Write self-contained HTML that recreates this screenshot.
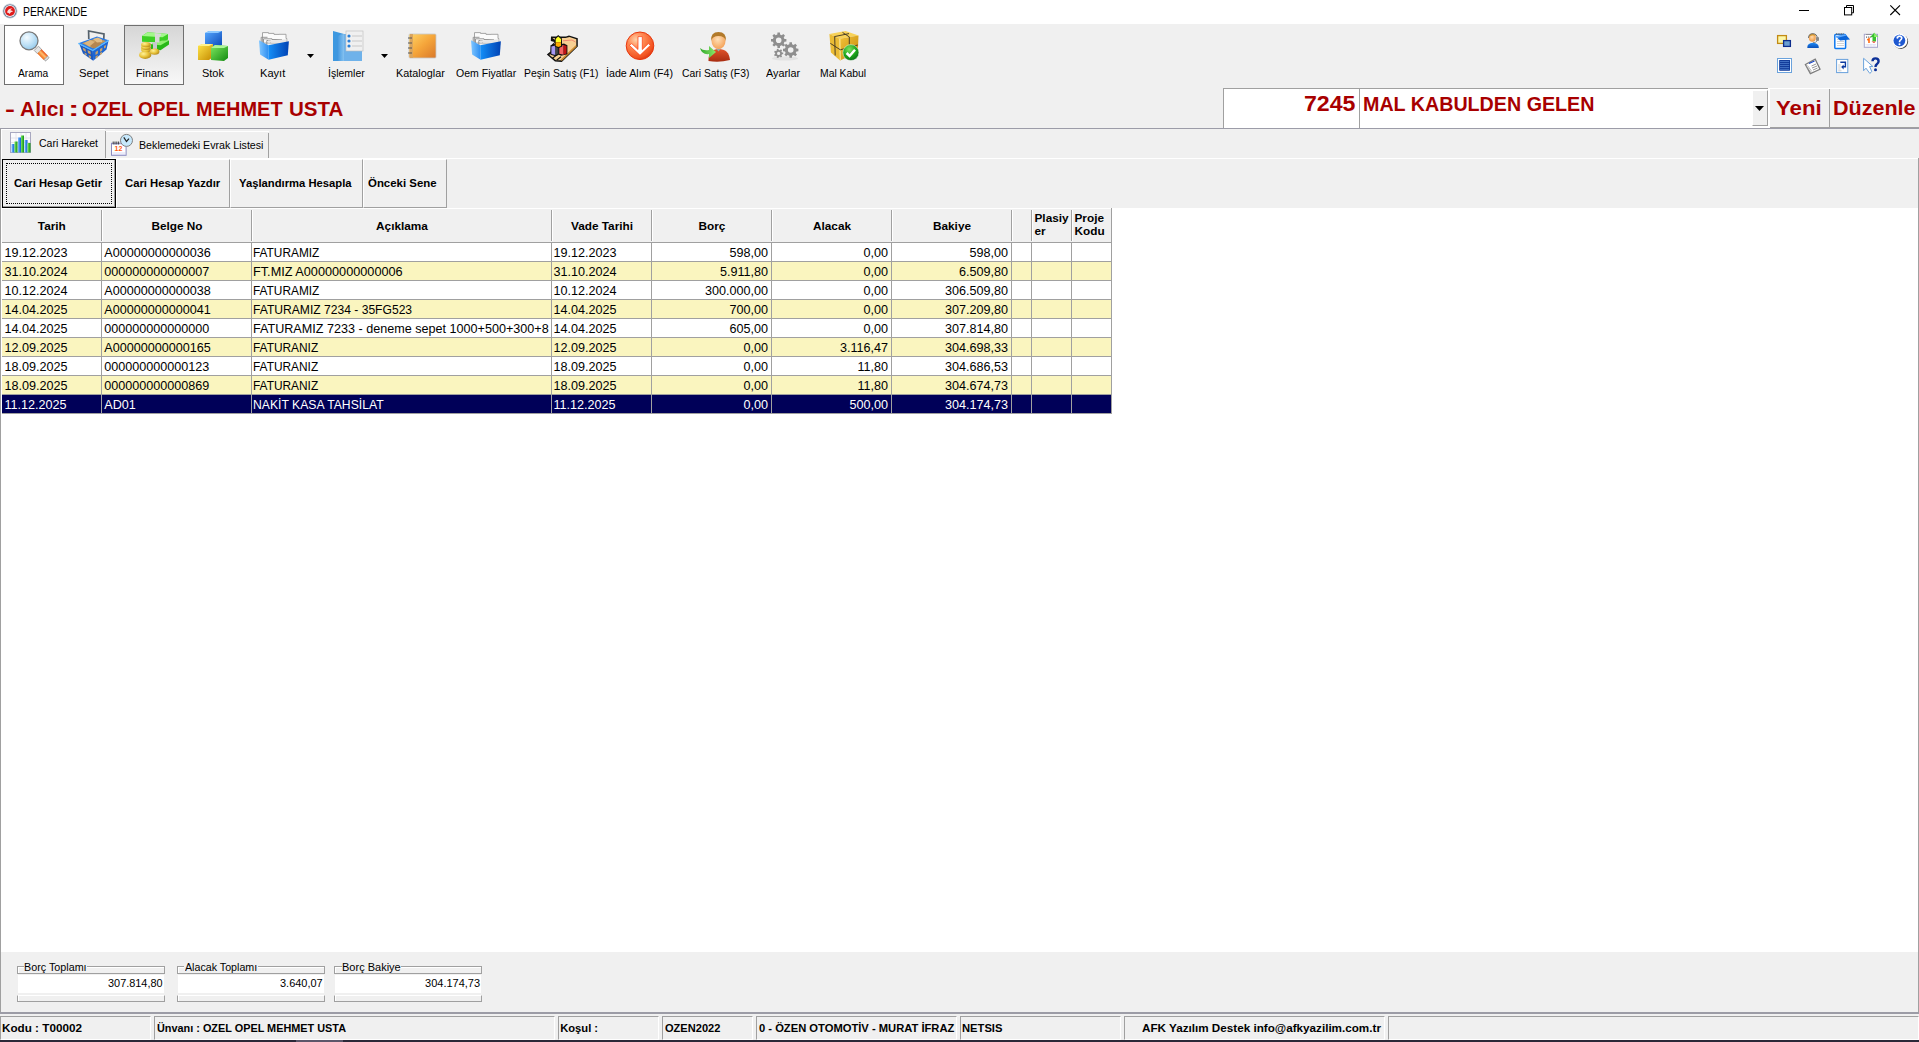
<!DOCTYPE html>
<html><head><meta charset="utf-8"><title>PERAKENDE</title>
<style>
*{box-sizing:border-box;margin:0;padding:0}
html,body{width:1919px;height:1042px;overflow:hidden;background:#f0f0f0;font-family:"Liberation Sans",sans-serif;color:#000;position:relative}
.a{position:absolute}
.t{position:absolute;white-space:nowrap;line-height:1}
svg.a{overflow:visible}
</style></head><body>
<div class="a" style="left:0px;top:0px;width:1919px;height:24px;background:#fff"></div>
<svg class="a" style="left:2px;top:3px" width="16" height="16" viewBox="0 0 16 16"><circle cx="8" cy="8" r="7.5" fill="#c9d0da"/><circle cx="8" cy="8" r="6.6" fill="#5e6e86"/><circle cx="8" cy="8" r="5.9" fill="#e8ecf2"/>
<circle cx="8" cy="8" r="4.9" fill="#e01a1a"/><path d="M5 9.5 Q6 5 10.5 5.5 Q8 6.5 8.5 7.5 Q10 7 11 8.5 Q8.5 8.5 7.5 11 Q7 9.5 5 9.5Z" fill="#fbe0dc"/></svg>
<div class="t" style="left:22.63px;top:6.44px;font-size:12px;transform:scaleX(0.8664);transform-origin:0 0;">PERAKENDE</div>
<div class="a" style="left:1799px;top:10px;width:10px;height:1px;background:#000"></div>
<svg class="a" style="left:1843px;top:4px" width="13" height="13" viewBox="0 0 13 13"><g fill="none" stroke="#000" stroke-width="1"><rect x="1.5" y="3.5" width="7.2" height="7.4"/><path d="M3.5 3.5V1.5H10.5V8.8H8.7"/></g></svg>
<svg class="a" style="left:1889px;top:4px" width="13" height="13" viewBox="0 0 13 13"><path d="M1.3 1.3L11 11M11 1.3L1.3 11" stroke="#000" stroke-width="1.1"/></svg>
<div class="a" style="left:4px;top:25px;width:60px;height:60px;background:#fff;border:1px solid #707070"></div>
<div class="a" style="left:124px;top:25px;width:60px;height:60px;background:linear-gradient(#d6d6d6,#f8f8f8);border:1px solid #707070"></div>
<svg class="a" style="left:18px;top:30px" width="32" height="32" viewBox="0 0 32 32"><defs><radialGradient id="gA" cx="0.38" cy="0.32" r="0.75"><stop offset="0" stop-color="#f4fbff"/><stop offset="0.55" stop-color="#bfe1f6"/><stop offset="1" stop-color="#8fc6ea"/></radialGradient>
<linearGradient id="gAh" x1="0" y1="0" x2="0" y2="1"><stop offset="0" stop-color="#e8480c"/><stop offset="0.45" stop-color="#ffc070"/><stop offset="1" stop-color="#f06414"/></linearGradient></defs>
<g transform="translate(23.6 23.6) rotate(45)">
<rect x="-7.5" y="-3" width="4.5" height="6" fill="#e4e4e4" stroke="#8a8a8a" stroke-width="0.7"/>
<rect x="-3" y="-3" width="9" height="6" fill="url(#gAh)"/>
<rect x="6" y="-2.6" width="2.2" height="5.2" rx="1" fill="#dcdcdc" stroke="#8a8a8a" stroke-width="0.7"/></g>
<circle cx="11" cy="10.8" r="9" fill="url(#gA)" stroke="#787878" stroke-width="1.3"/></svg>
<div class="t" style="left:17.90px;top:68.11px;font-size:10.5px;transform:scaleX(0.9742);transform-origin:0 0;">Arama</div>
<svg class="a" style="left:78px;top:30px" width="32" height="32" viewBox="0 0 32 32"><path d="M10.8 9 L10.6 1 L26 4 L25.6 12" fill="none" stroke="#56626c" stroke-width="1.7"/>
<path d="M0.4 13.3 L19 6.4 L30.7 10.2 L14.8 20.6Z" fill="#2a7ae6"/>
<path d="M4 13.2 L18.5 8.3 L28 11 L15 18.3Z" fill="#c49a5e"/>
<path d="M6 13 L12 10 L17 12 L17 16 L11 16.5Z" fill="#dcb47a"/><path d="M12 16 L18 11 L23 12.5 L22 16.5 L16 18.5Z" fill="#b48650"/><path d="M15 9 L20 7.5 L24 9.5 L24 12 L19 12.5Z" fill="#e2bd85"/>
<path d="M1.5 14.5 L14.8 20.6 L15.2 30.7 L5 23.5Z" fill="#1a58c0"/>
<path d="M14.8 20.6 L30.5 11 L28.5 19.5 L15.2 30.7Z" fill="#1d66d4"/>
<path d="M0.4 13.3 L14.8 20.6 L30.7 10.2" fill="none" stroke="#58b8ff" stroke-width="1.3"/>
<path d="M4.5 17.5L7.5 19L8 22L5.5 20.5Z M9.5 20L12.5 21.5L12.8 24.5L10 23Z M6.5 22.5L8.5 23.5L9 25.5L7 24.5Z M10.5 25L12.8 26L13 28.5L11 27.5Z M17.5 22L20 20.5L19.8 23.5L17.5 25Z M22 19L24.5 17.5L24.2 20.5L22 22Z M26 16L28 15L27.8 17.5L26 18.5Z M17.5 26.5L19.8 25L19.5 27.5L17.5 28.8Z M22 23L24 21.8L23.8 24L22 25.2Z" fill="#c9a26a"/></svg>
<div class="t" style="left:78.62px;top:68.11px;font-size:10.5px;transform:scaleX(1.0808);transform-origin:0 0;">Sepet</div>
<svg class="a" style="left:138px;top:30px" width="32" height="32" viewBox="0 0 32 32"><defs><radialGradient id="gC" cx="0.35" cy="0.35" r="0.75"><stop offset="0" stop-color="#fff39a"/><stop offset="0.55" stop-color="#e6bf35"/><stop offset="1" stop-color="#a9801a"/></radialGradient></defs>
<path d="M4 6 L9.5 2.3 L30 4 L30 9.5 L24.5 12.5 L4 11.8Z" fill="#3ccf24"/>
<path d="M4 6 L9.5 2.3 L30 4 L24.5 7.3Z" fill="#a2f88a"/>
<path d="M13 14.2 L24 10.6 L31 10.6 L31 14.5 L22.5 20.2 L13 19.2Z" fill="#28b818"/>
<path d="M13 14.2 L24 10.6 L31 10.6 L22.5 15.2Z" fill="#90f070"/>
<path d="M16.5 3.2 L23.5 3.8 L21.5 7.5 L21.5 12.5 L17 12.5 L17 7Z" fill="#d8d8d8"/>
<path d="M15 12.5 L19 12 L19 19 L15 19Z" fill="#c8c8d0"/>
<ellipse cx="8" cy="19.8" rx="4.9" ry="2.7" fill="url(#gC)"/><ellipse cx="8" cy="17.2" rx="4.9" ry="2.7" fill="url(#gC)"/><ellipse cx="8" cy="14.6" rx="4.9" ry="2.7" fill="url(#gC)"/>
<ellipse cx="16.7" cy="21.6" rx="4.7" ry="3.2" fill="url(#gC)"/>
<ellipse cx="7.2" cy="25" rx="6.2" ry="3.9" fill="url(#gC)"/></svg>
<div class="t" style="left:136.48px;top:68.11px;font-size:10.5px;transform:scaleX(1.0233);transform-origin:0 0;">Finans</div>
<svg class="a" style="left:198px;top:30px" width="32" height="32" viewBox="0 0 32 32"><defs><linearGradient id="gS1" x1="0" y1="0" x2="1" y2="1"><stop offset="0" stop-color="#57a8ff"/><stop offset="1" stop-color="#0a48b8"/></linearGradient>
<linearGradient id="gS2" x1="0" y1="0" x2="1" y2="1"><stop offset="0" stop-color="#ffe54a"/><stop offset="1" stop-color="#c48a00"/></linearGradient>
<linearGradient id="gS3" x1="0" y1="0" x2="1" y2="1"><stop offset="0" stop-color="#7fe860"/><stop offset="1" stop-color="#128a10"/></linearGradient></defs>
<path d="M7 3 L11 1 L24 1 L24 15 L20 17 L7 17Z" fill="url(#gS1)"/><path d="M7 3 L11 1 L24 1 L20 3Z" fill="#8cc8ff"/>
<path d="M0 16 L4 14 L15 14 L15 27 L11 30 L0 30Z" fill="url(#gS2)"/><path d="M0 16 L4 14 L15 14 L11 16Z" fill="#fff18a"/>
<path d="M13 18 L17 15 L30 16 L30 28 L26 31 L13 30Z" fill="url(#gS3)"/><path d="M13 18 L17 15 L30 16 L26 18Z" fill="#aef598"/></svg>
<div class="t" style="left:201.56px;top:68.11px;font-size:10.5px;transform:scaleX(1.0450);transform-origin:0 0;">Stok</div>
<svg class="a" style="left:258px;top:30px" width="32" height="32" viewBox="0 0 32 32"><defs><linearGradient id="gK" x1="0" y1="0" x2="1" y2="0"><stop offset="0" stop-color="#1590f8"/><stop offset="1" stop-color="#0042b4"/></linearGradient>
<linearGradient id="gKl" x1="0" y1="0" x2="1" y2="0"><stop offset="0" stop-color="#80c6ff"/><stop offset="1" stop-color="#2c8ef2"/></linearGradient></defs>
<path d="M4.5 13 V2.6 H10.5 V3.4 H16 V4.4 H21 V4.3 H28 V8.5 H28.8 V13 Z" fill="#fbfbfb" stroke="#9c9c9c" stroke-width="0.9"/>
<path d="M3.2 13.5 V7.3 H9.5 M5.5 14.5 V8.8 H14 V9.5 H24 M8.8 15 V10.5 H12.5 V13" fill="none" stroke="#8c8c8c" stroke-width="0.9"/>
<path d="M10 12.5 L10 10.5 L28.5 9.2 L28.5 13.5Z" fill="#e6e6e6"/>
<path d="M1 10.2 L10.2 15.2 L10.6 29.8 L2.1 24.4Z" fill="url(#gKl)"/>
<path d="M10.2 15.2 L30.9 11.2 L29.8 25.2 L10.6 29.8Z" fill="url(#gK)"/></svg>
<div class="t" style="left:260.44px;top:68.11px;font-size:10.5px;transform:scaleX(1.0565);transform-origin:0 0;">Kayıt</div>
<svg class="a" style="left:332px;top:30px" width="32" height="32" viewBox="0 0 32 32"><defs><linearGradient id="gI" x1="0" y1="0" x2="1" y2="0"><stop offset="0" stop-color="#3a92dd"/><stop offset="1" stop-color="#86c2f0"/></linearGradient></defs>
<path d="M1 1 L12 4 L12 31 L1 31Z" fill="#3d98e0"/>
<path d="M12 4 L30 4 L30 31 L12 31Z" fill="#6fb2ea"/>
<path d="M12 4 Q4 4 5 12 L5 31 L12 31Z" fill="url(#gI)"/>
<rect x="14" y="1" width="17" height="20" fill="#f0f0f0" stroke="#bcbcbc" stroke-width="0.6"/>
<circle cx="17" cy="6" r="1.6" fill="#2b7fd6"/><circle cx="17" cy="11" r="1.6" fill="#2b7fd6"/><circle cx="17" cy="16" r="1.6" fill="#2b7fd6"/>
<path d="M20 6H30M20 11H30M20 16H30" stroke="#c8c8c8" stroke-width="1.2"/></svg>
<div class="t" style="left:328.00px;top:68.11px;font-size:10.5px;transform:scaleX(1.0000);transform-origin:0 0;">İşlemler</div>
<svg class="a" style="left:406px;top:30px" width="32" height="32" viewBox="0 0 32 32"><defs><linearGradient id="gKt" x1="0" y1="0" x2="1" y2="1"><stop offset="0" stop-color="#ffd466"/><stop offset="0.5" stop-color="#f5a53a"/><stop offset="1" stop-color="#d9782a"/></linearGradient></defs>
<rect x="3" y="4" width="27" height="24" rx="1" fill="url(#gKt)" stroke="#c8c8c8" stroke-width="0.8"/>
<rect x="4" y="4" width="3" height="24" fill="#d9a560"/>
<path d="M2 8H6M2 13H6M2 18H6M2 23H6" stroke="#555" stroke-width="1.2"/></svg>
<div class="t" style="left:396.47px;top:68.11px;font-size:10.5px;transform:scaleX(1.0326);transform-origin:0 0;">Kataloglar</div>
<svg class="a" style="left:470px;top:30px" width="32" height="32" viewBox="0 0 32 32"><defs><linearGradient id="gK2" x1="0" y1="0" x2="1" y2="0"><stop offset="0" stop-color="#1590f8"/><stop offset="1" stop-color="#0042b4"/></linearGradient>
<linearGradient id="gK2l" x1="0" y1="0" x2="1" y2="0"><stop offset="0" stop-color="#80c6ff"/><stop offset="1" stop-color="#2c8ef2"/></linearGradient></defs>
<path d="M4.5 13 V2.6 H10.5 V3.4 H16 V4.4 H21 V4.3 H28 V8.5 H28.8 V13 Z" fill="#fbfbfb" stroke="#9c9c9c" stroke-width="0.9"/>
<path d="M3.2 13.5 V7.3 H9.5 M5.5 14.5 V8.8 H14 V9.5 H24 M8.8 15 V10.5 H12.5 V13" fill="none" stroke="#8c8c8c" stroke-width="0.9"/>
<path d="M10 12.5 L10 10.5 L28.5 9.2 L28.5 13.5Z" fill="#e6e6e6"/>
<path d="M1 10.2 L10.2 15.2 L10.6 29.8 L2.1 24.4Z" fill="url(#gK2l)"/>
<path d="M10.2 15.2 L30.9 11.2 L29.8 25.2 L10.6 29.8Z" fill="url(#gK2)"/></svg>
<div class="t" style="left:455.80px;top:68.11px;font-size:10.5px;transform:scaleX(1.0017);transform-origin:0 0;">Oem Fiyatlar</div>
<svg class="a" style="left:546px;top:30px" width="32" height="32" viewBox="0 0 32 32"><path d="M5 6.5 L20 6.5 L23 5.5 L31.8 8.3 L31.8 16.5 L15.8 32 L9 31.5 L0.8 24.5 L4.5 21.5 L5 15.5 L8.5 12 L4.8 11Z" fill="#111"/>
<path d="M6.5 8 L19.5 8 L23.5 7 L30.3 9.3 L30.3 15.8 L15.2 30.3 L10 30.2 L2.8 24.5 L6.2 21.8 L8 14 L10 10.8Z" fill="#f7cf92"/>
<path d="M15.2 30.3 L30.3 15.8" stroke="#c88a30" stroke-width="1.6"/>
<path d="M2.8 24.5 L7.5 21.3 M6.5 28.2 L11.2 24.6 M10.6 30.2 L15 26.8" stroke="#111" stroke-width="1.1"/>
<path d="M17 10.8 L26 10 L29.5 12" fill="none" stroke="#f08a70" stroke-width="1"/>
<path d="M4.5 15.3 L9.5 13.8 L12.8 15.3 L12.8 24.8 L9.5 26.3 L4.5 24.8Z" fill="#111"/>
<path d="M5.4 16.4 L9.4 15.4 L9.4 25 L5.4 23.9Z" fill="#a898f2"/>
<path d="M9.4 15.4 L11.9 16.1 L11.9 24.1 L9.4 25Z" fill="#454545"/>
<path d="M12.4 14.8 L18 13.6 L21.4 15.2 L21.4 24.2 L15.2 25.8 L12.4 24.6Z" fill="#111"/>
<path d="M13.3 15.9 L17.6 14.9 L17.6 24.7 L13.3 23.8Z" fill="#f26464"/>
<path d="M17.6 14.9 L20.5 15.9 L20.5 23.6 L17.6 24.7Z" fill="#c21212"/>
<path d="M12.2 5 L15.8 8.3 L16.2 16.6 L12.5 18.2 L8.8 16.6 L8.8 8.3Z" fill="#111"/>
<path d="M12.2 6.5 L15 9.1 L15 12.2 L9.7 12.2 L9.7 9.1Z" fill="#ffff22"/>
<path d="M9.7 12.2 L15 12.2 L15 16 L12.5 17.1 L9.7 16Z" fill="#ffaa00"/></svg>
<div class="t" style="left:523.71px;top:68.11px;font-size:10.5px;transform:scaleX(0.9905);transform-origin:0 0;">Peşin Satış (F1)</div>
<svg class="a" style="left:624px;top:30px" width="32" height="32" viewBox="0 0 32 32"><defs><radialGradient id="gIa" cx="0.35" cy="0.28" r="0.8"><stop offset="0" stop-color="#ffd2a8"/><stop offset="0.35" stop-color="#ff8a55"/><stop offset="0.8" stop-color="#f25522"/><stop offset="1" stop-color="#d83010"/></radialGradient></defs>
<circle cx="16" cy="15.8" r="13.8" fill="url(#gIa)" stroke="#e8380e" stroke-width="1"/>
<path d="M14 6.6 H18.3 V19.5 L24.3 13.6 L26.5 15.3 L16 25.3 L5.3 15.3 L7.7 13.6 L14 19.5Z" fill="#fff" stroke="#ff3a0a" stroke-width="0.7"/></svg>
<div class="t" style="left:605.88px;top:68.11px;font-size:10.5px;transform:scaleX(1.0169);transform-origin:0 0;">İade Alım (F4)</div>
<svg class="a" style="left:699px;top:30px" width="32" height="32" viewBox="0 0 32 32"><defs><radialGradient id="gCf" cx="0.45" cy="0.4" r="0.6"><stop offset="0" stop-color="#ffe0b8"/><stop offset="1" stop-color="#f5a35a"/></radialGradient>
<linearGradient id="gCb" x1="0" y1="0" x2="0" y2="1"><stop offset="0" stop-color="#e0532a"/><stop offset="1" stop-color="#a82c10"/></linearGradient>
<linearGradient id="gCg" x1="0" y1="0" x2="1" y2="0"><stop offset="0" stop-color="#2ea82a"/><stop offset="1" stop-color="#8ee86a"/></linearGradient></defs>
<path d="M9.5 31 Q9 19.5 19.5 19 Q30 19 31 30 Q20 33 9.5 31Z" fill="url(#gCb)"/>
<path d="M17 18.5 L19.5 21.5 L22 18.5Z" fill="#9aa"/>
<ellipse cx="19.5" cy="11" rx="7" ry="8" fill="url(#gCf)"/>
<path d="M12 11 Q11.5 2 19.5 2 Q27.5 2 27 11 Q25.5 6 19.5 6 Q13.5 6 12 11Z" fill="#b27a2a"/>
<path d="M1 18 Q3 25 10 24 L10 28 L17 22 L10 16 L10 20 Q4 21 1 18Z" fill="url(#gCg)"/></svg>
<div class="t" style="left:681.80px;top:68.11px;font-size:10.5px;transform:scaleX(0.9868);transform-origin:0 0;">Cari Satış (F3)</div>
<svg class="a" style="left:768px;top:30px" width="32" height="32" viewBox="0 0 32 32"><ellipse cx="17" cy="28.5" rx="13" ry="2" fill="#e2e2e2"/><g fill="#8e8e8e" fill-rule="evenodd"><path d="M18.40 9.08 L18.40 11.52 L16.44 11.68 L15.73 13.38 L17.01 14.88 L15.28 16.61 L13.78 15.33 L12.08 16.04 L11.92 18.00 L9.48 18.00 L9.32 16.04 L7.62 15.33 L6.12 16.61 L4.39 14.88 L5.67 13.38 L4.96 11.68 L3.00 11.52 L3.00 9.08 L4.96 8.92 L5.67 7.22 L4.39 5.72 L6.12 3.99 L7.62 5.27 L9.32 4.56 L9.48 2.60 L11.92 2.60 L12.08 4.56 L13.78 5.27 L15.28 3.99 L17.01 5.72 L15.73 7.22 L16.44 8.92Z M13.50 10.30 A2.8 2.8 0 1 0 7.90 10.30 A2.8 2.8 0 1 0 13.50 10.30Z"/><path d="M30.40 18.78 L30.40 21.22 L28.44 21.38 L27.73 23.08 L29.01 24.58 L27.28 26.31 L25.78 25.03 L24.08 25.74 L23.92 27.70 L21.48 27.70 L21.32 25.74 L19.62 25.03 L18.12 26.31 L16.39 24.58 L17.67 23.08 L16.96 21.38 L15.00 21.22 L15.00 18.78 L16.96 18.62 L17.67 16.92 L16.39 15.42 L18.12 13.69 L19.62 14.97 L21.32 14.26 L21.48 12.30 L23.92 12.30 L24.08 14.26 L25.78 14.97 L27.28 13.69 L29.01 15.42 L27.73 16.92 L28.44 18.62Z M25.50 20.00 A2.8 2.8 0 1 0 19.90 20.00 A2.8 2.8 0 1 0 25.50 20.00Z"/><path d="M15.22 22.56 L15.22 24.24 L13.97 24.33 L13.43 25.46 L14.14 26.49 L12.83 27.54 L11.98 26.62 L10.76 26.90 L10.39 28.10 L8.75 27.72 L8.94 26.48 L7.96 25.70 L6.80 26.16 L6.07 24.65 L7.16 24.02 L7.16 22.78 L6.07 22.15 L6.80 20.64 L7.96 21.10 L8.94 20.32 L8.75 19.08 L10.39 18.70 L10.76 19.90 L11.98 20.18 L12.83 19.26 L14.14 20.31 L13.43 21.34 L13.97 22.47Z M12.20 23.40 A1.6 1.6 0 1 0 9.00 23.40 A1.6 1.6 0 1 0 12.20 23.40Z"/></g></svg>
<div class="t" style="left:766.00px;top:68.11px;font-size:10.5px;transform:scaleX(1.0303);transform-origin:0 0;">Ayarlar</div>
<svg class="a" style="left:828px;top:30px" width="32" height="32" viewBox="0 0 32 32"><defs><radialGradient id="gMc" cx="0.4" cy="0.3" r="0.75"><stop offset="0" stop-color="#7ee060"/><stop offset="0.6" stop-color="#1aa41a"/><stop offset="1" stop-color="#0a6a1a"/></radialGradient>
<linearGradient id="gMr" x1="0" y1="0" x2="1" y2="1"><stop offset="0" stop-color="#f2c23a"/><stop offset="1" stop-color="#c48a0a"/></linearGradient></defs>
<path d="M1.4 4.1 L17.5 1 L30.5 5.6 L11.7 8.7Z" fill="#f8d257"/>
<path d="M1.4 4.1 L11.7 8.7 L12.1 30.5 L2.9 22.5Z" fill="#ebbc35"/>
<path d="M11.7 8.7 L30.5 5.6 L29.8 22 L12.1 30.5Z" fill="url(#gMr)"/>
<path d="M11.9 9 L12.3 30" stroke="#fff0a8" stroke-width="0.9"/>
<path d="M6.4 6.6 L21 3.6 M14.5 2.4 L21.3 6.9 L21.3 14.5 M6.7 6.6 L7.2 25.5 M2.3 13.3 L12.3 19.8 L29.8 15" fill="none" stroke="#3c3222" stroke-width="0.9"/>
<circle cx="22.9" cy="22.6" r="8" fill="url(#gMc)" stroke="#f8f8f8" stroke-width="0.5"/>
<path d="M18.6 23 L21.6 26 L27 19.8" fill="none" stroke="#fff" stroke-width="2.5"/></svg>
<div class="t" style="left:819.51px;top:68.11px;font-size:10.5px;transform:scaleX(0.9889);transform-origin:0 0;">Mal Kabul</div>
<svg class="a" style="left:307px;top:54px" width="7" height="4" viewBox="0 0 7 4"><path d="M0 0H7L3.5 4Z" fill="#000"/></svg>
<svg class="a" style="left:381px;top:54px" width="7" height="4" viewBox="0 0 7 4"><path d="M0 0H7L3.5 4Z" fill="#000"/></svg>
<svg class="a" style="left:1776px;top:33px" width="16" height="16" viewBox="0 0 16 16"><rect x="1.6" y="2.6" width="8.8" height="7.8" fill="#fdf7a6" stroke="#c28a14" stroke-width="1.3"/>
<rect x="7.6" y="7.6" width="6.8" height="5.8" fill="#6b9fd2" stroke="#0c2c8c" stroke-width="1.3"/></svg>
<svg class="a" style="left:1805px;top:33px" width="16" height="16" viewBox="0 0 16 16"><defs><linearGradient id="s2b" x1="0" y1="0" x2="0" y2="1"><stop offset="0" stop-color="#1f8af5"/><stop offset="1" stop-color="#0b4fb8"/></linearGradient>
<radialGradient id="s2f" cx="0.45" cy="0.4" r="0.6"><stop offset="0" stop-color="#ffdcae"/><stop offset="1" stop-color="#f0963e"/></radialGradient></defs>
<path d="M2.3 15 Q2 10 8 9.8 Q14 10 13.8 15Z" fill="url(#s2b)"/>
<ellipse cx="7.3" cy="4.8" rx="3.5" ry="4" fill="url(#s2f)"/>
<path d="M3.8 4 Q4 0.6 7.5 0.8 Q10.5 0.8 10.8 3.5 Q9 2 7 2.4 Q5 2.8 3.8 4Z" fill="#d89a28"/>
<path d="M3.5 5 Q3.6 0.5 8 0.7 Q12 0.8 12.3 5" fill="none" stroke="#707070" stroke-width="1"/>
<rect x="11" y="4" width="3" height="4" rx="1" fill="#8a8a8a"/>
<path d="M12 8 Q11 9.8 8 9.6" fill="none" stroke="#777" stroke-width="0.8"/></svg>
<svg class="a" style="left:1834px;top:33px" width="16" height="16" viewBox="0 0 16 16"><rect x="0.8" y="1.6" width="10.8" height="13.8" rx="0.8" fill="#fff" stroke="#0d78f0" stroke-width="1.5"/>
<path d="M2.5 0V2M4.2 0V2M5.9 0V2M7.6 0V2M9.3 0V2" stroke="#666" stroke-width="0.7"/>
<path d="M3 6.5H10M3 8.5H10M3 10.5H10M3 12.5H10" stroke="#c8c8c8" stroke-width="0.8"/>
<path d="M1.8 3.6 L11.4 1.2 L16 6.5 L6.1 7.5Z" fill="#0a64d8"/><path d="M1.8 3.6 L11.4 1.2 L12.5 2.5 L3 5Z" fill="#5aa8ff"/></svg>
<svg class="a" style="left:1863px;top:33px" width="16" height="16" viewBox="0 0 16 16"><rect x="1.3" y="1.3" width="13.2" height="13" fill="#fff" stroke="#a6a6cc" stroke-width="1"/>
<path d="M3 1.5H8.5" stroke="#888" stroke-width="0.8"/><path d="M3.2 4.1h0.9M5.3 4.1h0.9M7.4 4.1h0.9" stroke="#111" stroke-width="1"/>
<path d="M4.3 7 L6 6 L6 10" fill="none" stroke="#ff6a10" stroke-width="1.6"/>
<path d="M2.5 11.5H13M2.5 13H13M5 11V14M8 11V14M11 11V14" stroke="#dde0f4" stroke-width="0.7"/>
<path d="M8.5 8.5 L13 8.5 L11 10 Z" fill="#ee2a10"/>
<path d="M11.2 -0.2 L15.3 4 L13 4 L13 8.2 L9.5 8.2 L9.5 4 L7.2 4Z" fill="#38c030"/><path d="M11.2 -0.2 L15.3 4 L11.2 4Z" fill="#8ef06e"/></svg>
<svg class="a" style="left:1892px;top:33px" width="16" height="16" viewBox="0 0 16 16"><circle cx="8.8" cy="8.6" r="7.3" fill="#3a3a3a"/><circle cx="8" cy="7.8" r="7.4" fill="#fff"/>
<circle cx="7.4" cy="7.6" r="5.9" fill="#1e58d0"/><path d="M4.2 5 A3 3 0 0 1 10.4 5.5" fill="none" stroke="#5b8ae8" stroke-width="1"/>
<path d="M5.3 5.6 Q5.4 3.2 7.6 3.3 Q9.8 3.4 9.7 5.3 Q9.6 6.6 8.2 7.3 Q7.5 7.8 7.5 9.3" fill="none" stroke="#fff" stroke-width="1.6"/>
<circle cx="7.5" cy="11.3" r="1" fill="#fff"/></svg>
<svg class="a" style="left:1776px;top:58px" width="16" height="16" viewBox="0 0 16 16"><rect x="1.5" y="0.5" width="14" height="14" fill="#fff" stroke="#6aa2dc" stroke-width="1"/>
<rect x="3.2" y="1.9" width="10.8" height="10.8" rx="0.4" fill="#0d3796"/>
<path d="M4 3.4H13.2M4 5.4H13.2M4 7.4H13.2M4 9.4H13.2M4 11.3H13.2" stroke="#5d8fdc" stroke-width="0.7"/></svg>
<svg class="a" style="left:1805px;top:58px" width="16" height="16" viewBox="0 0 16 16"><path d="M0.4 6.5 L10.2 1.2 L15 11.3 L5.4 15.6Z" fill="#fff" stroke="#7c7c7c" stroke-width="1.3"/>
<path d="M1.5 8.5 L6 14.5 M2.5 7.5 L6.8 13.5" stroke="#9a9a9a" stroke-width="0.7"/>
<path d="M4 5.5 L9.5 3" stroke="#1b48c8" stroke-width="1.2"/>
<path d="M6.5 8 L11 6 M7 10 L12 8 M8 12 L12.5 10" stroke="#8a8a8a" stroke-width="0.9"/></svg>
<svg class="a" style="left:1834px;top:58px" width="16" height="16" viewBox="0 0 16 16"><rect x="2.6" y="1.4" width="11.2" height="13.2" fill="#fff" stroke="#68a0dc" stroke-width="1"/>
<path d="M4.2 7H6.8M4.2 9H6.8M4.2 11H6.5M4.2 12.8H7.5" stroke="#c0c0c0" stroke-width="0.8"/>
<path d="M6.3 4.3 H11.4 V8.8 H8.5" fill="none" stroke="#0c3aa0" stroke-width="1.4"/>
<path d="M7.1 9 L9.6 6.6 L9.6 11.5Z" fill="#0c3aa0"/></svg>
<svg class="a" style="left:1863px;top:58px" width="16" height="16" viewBox="0 0 16 16"><path d="M0.6 0.3 L0.6 12.7 L3 10.2 L6.8 15.4 L8.8 13.5 L6.6 8.6 L9.8 8.4Z" fill="#fff" stroke="#5a98d8" stroke-width="0.9"/>
<path d="M9.5 3.2 Q9.6 0.4 12.4 0.4 Q15.6 0.4 15.6 3.2 Q15.6 5 13.8 6.2 Q12.5 7.2 12.5 9" fill="none" stroke="#0c3098" stroke-width="2.4"/>
<circle cx="12.5" cy="11.8" r="1.5" fill="#0c3098"/></svg>
<div class="t" style="left:5.04px;top:98.65px;font-size:20.5px;transform:scaleX(1.4600);transform-origin:0 0;font-weight:bold;color:#a80000;">-</div>
<div class="t" style="left:19.98px;top:98.65px;font-size:20.5px;transform:scaleX(1.0244);transform-origin:0 0;font-weight:bold;color:#a80000;">Alıcı</div>
<div class="t" style="left:67.67px;top:98.65px;font-size:20.5px;transform:scaleX(1.6667);transform-origin:0 0;font-weight:bold;color:#a80000;">:</div>
<div class="t" style="left:82.37px;top:98.65px;font-size:20.5px;transform:scaleX(0.9340);transform-origin:0 0;font-weight:bold;color:#a80000;">OZEL</div>
<div class="t" style="left:138.27px;top:98.65px;font-size:20.5px;transform:scaleX(0.9315);transform-origin:0 0;font-weight:bold;color:#a80000;">OPEL</div>
<div class="t" style="left:195.72px;top:98.65px;font-size:20.5px;transform:scaleX(0.9750);transform-origin:0 0;font-weight:bold;color:#a80000;">MEHMET</div>
<div class="t" style="left:288.70px;top:98.65px;font-size:20.5px;transform:scaleX(1.0019);transform-origin:0 0;font-weight:bold;color:#a80000;">USTA</div>
<div class="a" style="left:1223px;top:88px;width:546px;height:40px;background:#fff;border-left:1px solid #a0a0a0;border-top:1px solid #a0a0a0"></div>
<div class="a" style="left:1359px;top:89px;width:1px;height:39px;background:#a0a0a0"></div>
<div class="t" style="left:1304.45px;top:92.68px;font-size:22px;transform:scaleX(1.0521);transform-origin:0 0;font-weight:bold;color:#a80000;">7245</div>
<div class="t" style="left:1362.72px;top:93.67px;font-size:20px;transform:scaleX(0.9841);transform-origin:0 0;font-weight:bold;color:#a80000;">MAL KABULDEN GELEN</div>
<div class="a" style="left:1752px;top:90px;width:16px;height:36px;background:#f0f0f0;border-right:1px solid #a0a0a0;border-bottom:1px solid #a0a0a0;border-left:1px solid #fff;border-top:1px solid #fff"></div>
<svg class="a" style="left:1755px;top:106px" width="9" height="5" viewBox="0 0 9 5"><path d="M0 0H9L4.5 5Z" fill="#000"/></svg>
<div class="a" style="left:1768px;top:88px;width:151px;height:40px;background:#f0f0f0;border-top:1px solid #fff"></div>
<div class="a" style="left:1768px;top:88px;width:2px;height:40px;background:#fff"></div>
<div class="a" style="left:1829px;top:89px;width:1px;height:38px;background:#a0a0a0"></div>
<div class="a" style="left:1770px;top:127px;width:149px;height:1px;background:#a0a0a0"></div>
<div class="t" style="left:1775.94px;top:97.22px;font-size:21px;transform:scaleX(1.0585);transform-origin:0 0;font-weight:bold;color:#a80000;">Yeni</div>
<div class="t" style="left:1832.57px;top:97.22px;font-size:21px;transform:scaleX(1.0253);transform-origin:0 0;font-weight:bold;color:#a80000;">Düzenle</div>
<div class="a" style="left:0px;top:128px;width:1919px;height:1px;background:#9c9ca8"></div>
<div class="a" style="left:1px;top:129px;width:104px;height:30px;background:#f0f0f0;border-left:1px solid #fff;border-top:1px solid #fff"></div>
<div class="a" style="left:105px;top:131px;width:1px;height:27px;background:#a0a0a0"></div>
<svg class="a" style="left:10px;top:132px" width="21" height="21" viewBox="0 0 21 21"><defs><linearGradient id="tcb" x1="0" y1="0" x2="1" y2="0"><stop offset="0" stop-color="#7cc0ff"/><stop offset="1" stop-color="#0a5ad8"/></linearGradient>
<linearGradient id="tcg" x1="0" y1="0" x2="1" y2="0"><stop offset="0" stop-color="#7ae860"/><stop offset="1" stop-color="#109010"/></linearGradient></defs>
<rect x="0.5" y="0.5" width="20" height="20" fill="#fbfbfd" stroke="#a8a8c0" stroke-width="1"/>
<path d="M1 6H20M1 10.5H20M1 15H20M6 1V20M11 1V20M16 1V20" stroke="#e0e0e8" stroke-width="0.8"/>
<rect x="1.5" y="12" width="3" height="8.5" fill="url(#tcb)"/><rect x="4.5" y="9.5" width="3" height="11" fill="url(#tcg)"/>
<rect x="8" y="5.5" width="3" height="15" fill="url(#tcb)"/><rect x="11" y="3.5" width="3" height="17" fill="url(#tcg)"/>
<rect x="14.5" y="8" width="3" height="12.5" fill="url(#tcb)"/><rect x="17.5" y="11" width="3" height="9.5" fill="url(#tcg)"/></svg>
<div class="t" style="left:39.00px;top:138.11px;font-size:10.5px;">Cari Hareket</div>
<div class="a" style="left:106px;top:131px;width:163px;height:27px;background:#f0f0f0;border-top:1px solid #fff"></div>
<div class="a" style="left:268px;top:133px;width:1px;height:25px;background:#a0a0a0"></div>
<svg class="a" style="left:111px;top:134px" width="22" height="22" viewBox="0 0 22 22"><rect x="0.5" y="9.3" width="14.6" height="12" fill="#fff" stroke="#8a8ac0" stroke-width="1"/>
<path d="M2.5 10.5H13.5" stroke="#e8e8ff" stroke-width="1"/>
<path d="M2.2 7.5V10.5M4 7.5V10.5M5.8 7.5V10.5M7.6 7.5V10.5" stroke="#333" stroke-width="0.9"/>
<text x="3.6" y="17.3" font-family="Liberation Sans" font-weight="bold" font-size="7" fill="#ff5a10">12</text>
<path d="M1.5 19H14M1.5 20.5H14" stroke="#d0d0f0" stroke-width="0.8"/>
<circle cx="15.5" cy="6.4" r="6" fill="#c6e8fc" stroke="#808080" stroke-width="1"/>
<path d="M12.8 3.4 L15.5 7.5 L18 4.6" fill="none" stroke="#222" stroke-width="1.2"/></svg>
<div class="t" style="left:139.28px;top:140.11px;font-size:10.5px;transform:scaleX(1.0157);transform-origin:0 0;">Beklemedeki Evrak Listesi</div>
<div class="a" style="left:0px;top:129px;width:1px;height:884px;background:#a0a0a0"></div>
<div class="a" style="left:1918px;top:158px;width:1px;height:855px;background:#a0a0a0"></div>
<div class="a" style="left:106px;top:158px;width:1812px;height:1px;background:#fff"></div>
<div class="a" style="left:2px;top:159px;width:114px;height:49px;border:1px solid #000;background:#f0f0f0;box-shadow:inset -1px -1px 0 #a0a0a0"></div>
<div class="a" style="left:6px;top:163px;width:106px;height:41px;border:1px dotted #000"></div>
<div class="t" style="left:14.40px;top:178.43px;font-size:11.3px;transform:scaleX(0.9944);transform-origin:0 0;font-weight:bold;">Cari Hesap Getir</div>
<div class="a" style="left:116px;top:159px;width:114px;height:49px;border-right:1px solid #a0a0a0;border-bottom:1px solid #a0a0a0;border-left:1px solid #fff;border-top:1px solid #fff"></div>
<div class="t" style="left:125.00px;top:178.43px;font-size:11.3px;transform:scaleX(1.0000);transform-origin:0 0;font-weight:bold;">Cari Hesap Yazdır</div>
<div class="a" style="left:230px;top:159px;width:133px;height:49px;border-right:1px solid #a0a0a0;border-bottom:1px solid #a0a0a0;border-left:1px solid #fff;border-top:1px solid #fff"></div>
<div class="t" style="left:238.75px;top:178.43px;font-size:11.3px;transform:scaleX(0.9956);transform-origin:0 0;font-weight:bold;">Yaşlandırma Hesapla</div>
<div class="a" style="left:363px;top:159px;width:84px;height:49px;border-right:1px solid #a0a0a0;border-bottom:1px solid #a0a0a0;border-left:1px solid #fff;border-top:1px solid #fff"></div>
<div class="t" style="left:367.50px;top:178.43px;font-size:11.3px;transform:scaleX(1.0110);transform-origin:0 0;font-weight:bold;">Önceki Sene</div>
<div class="a" style="left:1px;top:208px;width:1917px;height:744px;background:#fff"></div>
<div class="a" style="left:2px;top:209px;width:1109px;height:33px;background:#f0f0f0"></div>
<div class="a" style="left:2px;top:242px;width:1110px;height:1px;background:#a0a0a0"></div>
<div class="t" style="left:2.30px;width:99px;text-align:center;top:220.51px;font-size:11.8px;font-weight:bold;">Tarih</div>
<div class="t" style="left:102.00px;width:150px;text-align:center;top:220.51px;font-size:11.8px;font-weight:bold;">Belge No</div>
<div class="t" style="left:252.00px;width:300px;text-align:center;top:220.51px;font-size:11.8px;font-weight:bold;">Açıklama</div>
<div class="t" style="left:552.00px;width:100px;text-align:center;top:220.51px;font-size:11.8px;font-weight:bold;">Vade Tarihi</div>
<div class="t" style="left:652.00px;width:120px;text-align:center;top:220.51px;font-size:11.8px;font-weight:bold;">Borç</div>
<div class="t" style="left:772.00px;width:120px;text-align:center;top:220.51px;font-size:11.8px;font-weight:bold;">Alacak</div>
<div class="t" style="left:892.00px;width:120px;text-align:center;top:220.51px;font-size:11.8px;font-weight:bold;">Bakiye</div>
<div class="t" style="left:1034.50px;top:212.61px;font-size:11.8px;font-weight:bold;">Plasiy</div>
<div class="t" style="left:1034.50px;top:225.51px;font-size:11.8px;font-weight:bold;">er</div>
<div class="t" style="left:1074.50px;top:212.61px;font-size:11.8px;font-weight:bold;">Proje</div>
<div class="t" style="left:1074.50px;top:225.51px;font-size:11.8px;font-weight:bold;">Kodu</div>
<div class="a" style="left:101px;top:210px;width:1px;height:31px;background:#a0a0a0"></div>
<div class="a" style="left:102px;top:210px;width:1px;height:31px;background:#fff"></div>
<div class="a" style="left:251px;top:210px;width:1px;height:31px;background:#a0a0a0"></div>
<div class="a" style="left:252px;top:210px;width:1px;height:31px;background:#fff"></div>
<div class="a" style="left:551px;top:210px;width:1px;height:31px;background:#a0a0a0"></div>
<div class="a" style="left:552px;top:210px;width:1px;height:31px;background:#fff"></div>
<div class="a" style="left:651px;top:210px;width:1px;height:31px;background:#a0a0a0"></div>
<div class="a" style="left:652px;top:210px;width:1px;height:31px;background:#fff"></div>
<div class="a" style="left:771px;top:210px;width:1px;height:31px;background:#a0a0a0"></div>
<div class="a" style="left:772px;top:210px;width:1px;height:31px;background:#fff"></div>
<div class="a" style="left:891px;top:210px;width:1px;height:31px;background:#a0a0a0"></div>
<div class="a" style="left:892px;top:210px;width:1px;height:31px;background:#fff"></div>
<div class="a" style="left:1011px;top:210px;width:1px;height:31px;background:#a0a0a0"></div>
<div class="a" style="left:1012px;top:210px;width:1px;height:31px;background:#fff"></div>
<div class="a" style="left:1031px;top:210px;width:1px;height:31px;background:#a0a0a0"></div>
<div class="a" style="left:1032px;top:210px;width:1px;height:31px;background:#fff"></div>
<div class="a" style="left:1071px;top:210px;width:1px;height:31px;background:#a0a0a0"></div>
<div class="a" style="left:1072px;top:210px;width:1px;height:31px;background:#fff"></div>
<div class="a" style="left:1111px;top:208px;width:1px;height:35px;background:#a0a0a0"></div>
<div class="a" style="left:2px;top:243px;width:1109px;height:18px;background:#fff"></div>
<div class="a" style="left:2px;top:261px;width:1110px;height:1px;background:#a0a0a0"></div>
<div class="t" style="left:4.50px;top:247.23px;font-size:12.6px;">19.12.2023</div>
<div class="t" style="left:104.30px;top:247.23px;font-size:12.6px;">A00000000000036</div>
<div class="t" style="left:252.96px;top:247.23px;font-size:12.6px;transform:scaleX(0.9420);transform-origin:0 0;">FATURAMIZ</div>
<div class="t" style="left:553.50px;top:247.23px;font-size:12.6px;">19.12.2023</div>
<div class="t" style="left:648.00px;width:120px;text-align:right;top:247.23px;font-size:12.6px;">598,00</div>
<div class="t" style="left:768.00px;width:120px;text-align:right;top:247.23px;font-size:12.6px;">0,00</div>
<div class="t" style="left:888.00px;width:120px;text-align:right;top:247.23px;font-size:12.6px;">598,00</div>
<div class="a" style="left:101px;top:243px;width:1px;height:18px;background:#a0a0a0"></div>
<div class="a" style="left:251px;top:243px;width:1px;height:18px;background:#a0a0a0"></div>
<div class="a" style="left:551px;top:243px;width:1px;height:18px;background:#a0a0a0"></div>
<div class="a" style="left:651px;top:243px;width:1px;height:18px;background:#a0a0a0"></div>
<div class="a" style="left:771px;top:243px;width:1px;height:18px;background:#a0a0a0"></div>
<div class="a" style="left:891px;top:243px;width:1px;height:18px;background:#a0a0a0"></div>
<div class="a" style="left:1011px;top:243px;width:1px;height:18px;background:#a0a0a0"></div>
<div class="a" style="left:1031px;top:243px;width:1px;height:18px;background:#a0a0a0"></div>
<div class="a" style="left:1071px;top:243px;width:1px;height:18px;background:#a0a0a0"></div>
<div class="a" style="left:1111px;top:243px;width:1px;height:18px;background:#a0a0a0"></div>
<div class="a" style="left:2px;top:262px;width:1109px;height:18px;background:#faf5bf"></div>
<div class="a" style="left:2px;top:280px;width:1110px;height:1px;background:#a0a0a0"></div>
<div class="t" style="left:4.50px;top:266.23px;font-size:12.6px;">31.10.2024</div>
<div class="t" style="left:104.30px;top:266.23px;font-size:12.6px;">000000000000007</div>
<div class="t" style="left:252.89px;top:266.23px;font-size:12.6px;transform:scaleX(1.0082);transform-origin:0 0;">FT.MIZ A00000000000006</div>
<div class="t" style="left:553.50px;top:266.23px;font-size:12.6px;">31.10.2024</div>
<div class="t" style="left:648.00px;width:120px;text-align:right;top:266.23px;font-size:12.6px;">5.911,80</div>
<div class="t" style="left:768.00px;width:120px;text-align:right;top:266.23px;font-size:12.6px;">0,00</div>
<div class="t" style="left:888.00px;width:120px;text-align:right;top:266.23px;font-size:12.6px;">6.509,80</div>
<div class="a" style="left:101px;top:262px;width:1px;height:18px;background:#a0a0a0"></div>
<div class="a" style="left:251px;top:262px;width:1px;height:18px;background:#a0a0a0"></div>
<div class="a" style="left:551px;top:262px;width:1px;height:18px;background:#a0a0a0"></div>
<div class="a" style="left:651px;top:262px;width:1px;height:18px;background:#a0a0a0"></div>
<div class="a" style="left:771px;top:262px;width:1px;height:18px;background:#a0a0a0"></div>
<div class="a" style="left:891px;top:262px;width:1px;height:18px;background:#a0a0a0"></div>
<div class="a" style="left:1011px;top:262px;width:1px;height:18px;background:#a0a0a0"></div>
<div class="a" style="left:1031px;top:262px;width:1px;height:18px;background:#a0a0a0"></div>
<div class="a" style="left:1071px;top:262px;width:1px;height:18px;background:#a0a0a0"></div>
<div class="a" style="left:1111px;top:262px;width:1px;height:18px;background:#a0a0a0"></div>
<div class="a" style="left:2px;top:281px;width:1109px;height:18px;background:#fff"></div>
<div class="a" style="left:2px;top:299px;width:1110px;height:1px;background:#a0a0a0"></div>
<div class="t" style="left:4.50px;top:285.23px;font-size:12.6px;">10.12.2024</div>
<div class="t" style="left:104.30px;top:285.23px;font-size:12.6px;">A00000000000038</div>
<div class="t" style="left:252.96px;top:285.23px;font-size:12.6px;transform:scaleX(0.9420);transform-origin:0 0;">FATURAMIZ</div>
<div class="t" style="left:553.50px;top:285.23px;font-size:12.6px;">10.12.2024</div>
<div class="t" style="left:648.00px;width:120px;text-align:right;top:285.23px;font-size:12.6px;">300.000,00</div>
<div class="t" style="left:768.00px;width:120px;text-align:right;top:285.23px;font-size:12.6px;">0,00</div>
<div class="t" style="left:888.00px;width:120px;text-align:right;top:285.23px;font-size:12.6px;">306.509,80</div>
<div class="a" style="left:101px;top:281px;width:1px;height:18px;background:#a0a0a0"></div>
<div class="a" style="left:251px;top:281px;width:1px;height:18px;background:#a0a0a0"></div>
<div class="a" style="left:551px;top:281px;width:1px;height:18px;background:#a0a0a0"></div>
<div class="a" style="left:651px;top:281px;width:1px;height:18px;background:#a0a0a0"></div>
<div class="a" style="left:771px;top:281px;width:1px;height:18px;background:#a0a0a0"></div>
<div class="a" style="left:891px;top:281px;width:1px;height:18px;background:#a0a0a0"></div>
<div class="a" style="left:1011px;top:281px;width:1px;height:18px;background:#a0a0a0"></div>
<div class="a" style="left:1031px;top:281px;width:1px;height:18px;background:#a0a0a0"></div>
<div class="a" style="left:1071px;top:281px;width:1px;height:18px;background:#a0a0a0"></div>
<div class="a" style="left:1111px;top:281px;width:1px;height:18px;background:#a0a0a0"></div>
<div class="a" style="left:2px;top:300px;width:1109px;height:18px;background:#faf5bf"></div>
<div class="a" style="left:2px;top:318px;width:1110px;height:1px;background:#a0a0a0"></div>
<div class="t" style="left:4.50px;top:304.23px;font-size:12.6px;">14.04.2025</div>
<div class="t" style="left:104.30px;top:304.23px;font-size:12.6px;">A00000000000041</div>
<div class="t" style="left:252.94px;top:304.23px;font-size:12.6px;transform:scaleX(0.9604);transform-origin:0 0;">FATURAMIZ 7234 - 35FG523</div>
<div class="t" style="left:553.50px;top:304.23px;font-size:12.6px;">14.04.2025</div>
<div class="t" style="left:648.00px;width:120px;text-align:right;top:304.23px;font-size:12.6px;">700,00</div>
<div class="t" style="left:768.00px;width:120px;text-align:right;top:304.23px;font-size:12.6px;">0,00</div>
<div class="t" style="left:888.00px;width:120px;text-align:right;top:304.23px;font-size:12.6px;">307.209,80</div>
<div class="a" style="left:101px;top:300px;width:1px;height:18px;background:#a0a0a0"></div>
<div class="a" style="left:251px;top:300px;width:1px;height:18px;background:#a0a0a0"></div>
<div class="a" style="left:551px;top:300px;width:1px;height:18px;background:#a0a0a0"></div>
<div class="a" style="left:651px;top:300px;width:1px;height:18px;background:#a0a0a0"></div>
<div class="a" style="left:771px;top:300px;width:1px;height:18px;background:#a0a0a0"></div>
<div class="a" style="left:891px;top:300px;width:1px;height:18px;background:#a0a0a0"></div>
<div class="a" style="left:1011px;top:300px;width:1px;height:18px;background:#a0a0a0"></div>
<div class="a" style="left:1031px;top:300px;width:1px;height:18px;background:#a0a0a0"></div>
<div class="a" style="left:1071px;top:300px;width:1px;height:18px;background:#a0a0a0"></div>
<div class="a" style="left:1111px;top:300px;width:1px;height:18px;background:#a0a0a0"></div>
<div class="a" style="left:2px;top:319px;width:1109px;height:18px;background:#fff"></div>
<div class="a" style="left:2px;top:337px;width:1110px;height:1px;background:#a0a0a0"></div>
<div class="t" style="left:4.50px;top:323.23px;font-size:12.6px;">14.04.2025</div>
<div class="t" style="left:104.30px;top:323.23px;font-size:12.6px;">000000000000000</div>
<div class="t" style="left:252.90px;top:323.23px;font-size:12.6px;transform:scaleX(1.0003);transform-origin:0 0;">FATURAMIZ 7233 - deneme sepet 1000+500+300+8</div>
<div class="t" style="left:553.50px;top:323.23px;font-size:12.6px;">14.04.2025</div>
<div class="t" style="left:648.00px;width:120px;text-align:right;top:323.23px;font-size:12.6px;">605,00</div>
<div class="t" style="left:768.00px;width:120px;text-align:right;top:323.23px;font-size:12.6px;">0,00</div>
<div class="t" style="left:888.00px;width:120px;text-align:right;top:323.23px;font-size:12.6px;">307.814,80</div>
<div class="a" style="left:101px;top:319px;width:1px;height:18px;background:#a0a0a0"></div>
<div class="a" style="left:251px;top:319px;width:1px;height:18px;background:#a0a0a0"></div>
<div class="a" style="left:551px;top:319px;width:1px;height:18px;background:#a0a0a0"></div>
<div class="a" style="left:651px;top:319px;width:1px;height:18px;background:#a0a0a0"></div>
<div class="a" style="left:771px;top:319px;width:1px;height:18px;background:#a0a0a0"></div>
<div class="a" style="left:891px;top:319px;width:1px;height:18px;background:#a0a0a0"></div>
<div class="a" style="left:1011px;top:319px;width:1px;height:18px;background:#a0a0a0"></div>
<div class="a" style="left:1031px;top:319px;width:1px;height:18px;background:#a0a0a0"></div>
<div class="a" style="left:1071px;top:319px;width:1px;height:18px;background:#a0a0a0"></div>
<div class="a" style="left:1111px;top:319px;width:1px;height:18px;background:#a0a0a0"></div>
<div class="a" style="left:2px;top:338px;width:1109px;height:18px;background:#faf5bf"></div>
<div class="a" style="left:2px;top:356px;width:1110px;height:1px;background:#a0a0a0"></div>
<div class="t" style="left:4.50px;top:342.23px;font-size:12.6px;">12.09.2025</div>
<div class="t" style="left:104.30px;top:342.23px;font-size:12.6px;">A00000000000165</div>
<div class="t" style="left:252.96px;top:342.23px;font-size:12.6px;transform:scaleX(0.9441);transform-origin:0 0;">FATURANIZ</div>
<div class="t" style="left:553.50px;top:342.23px;font-size:12.6px;">12.09.2025</div>
<div class="t" style="left:648.00px;width:120px;text-align:right;top:342.23px;font-size:12.6px;">0,00</div>
<div class="t" style="left:768.00px;width:120px;text-align:right;top:342.23px;font-size:12.6px;">3.116,47</div>
<div class="t" style="left:888.00px;width:120px;text-align:right;top:342.23px;font-size:12.6px;">304.698,33</div>
<div class="a" style="left:101px;top:338px;width:1px;height:18px;background:#a0a0a0"></div>
<div class="a" style="left:251px;top:338px;width:1px;height:18px;background:#a0a0a0"></div>
<div class="a" style="left:551px;top:338px;width:1px;height:18px;background:#a0a0a0"></div>
<div class="a" style="left:651px;top:338px;width:1px;height:18px;background:#a0a0a0"></div>
<div class="a" style="left:771px;top:338px;width:1px;height:18px;background:#a0a0a0"></div>
<div class="a" style="left:891px;top:338px;width:1px;height:18px;background:#a0a0a0"></div>
<div class="a" style="left:1011px;top:338px;width:1px;height:18px;background:#a0a0a0"></div>
<div class="a" style="left:1031px;top:338px;width:1px;height:18px;background:#a0a0a0"></div>
<div class="a" style="left:1071px;top:338px;width:1px;height:18px;background:#a0a0a0"></div>
<div class="a" style="left:1111px;top:338px;width:1px;height:18px;background:#a0a0a0"></div>
<div class="a" style="left:2px;top:357px;width:1109px;height:18px;background:#fff"></div>
<div class="a" style="left:2px;top:375px;width:1110px;height:1px;background:#a0a0a0"></div>
<div class="t" style="left:4.50px;top:361.23px;font-size:12.6px;">18.09.2025</div>
<div class="t" style="left:104.30px;top:361.23px;font-size:12.6px;">000000000000123</div>
<div class="t" style="left:252.96px;top:361.23px;font-size:12.6px;transform:scaleX(0.9441);transform-origin:0 0;">FATURANIZ</div>
<div class="t" style="left:553.50px;top:361.23px;font-size:12.6px;">18.09.2025</div>
<div class="t" style="left:648.00px;width:120px;text-align:right;top:361.23px;font-size:12.6px;">0,00</div>
<div class="t" style="left:768.00px;width:120px;text-align:right;top:361.23px;font-size:12.6px;">11,80</div>
<div class="t" style="left:888.00px;width:120px;text-align:right;top:361.23px;font-size:12.6px;">304.686,53</div>
<div class="a" style="left:101px;top:357px;width:1px;height:18px;background:#a0a0a0"></div>
<div class="a" style="left:251px;top:357px;width:1px;height:18px;background:#a0a0a0"></div>
<div class="a" style="left:551px;top:357px;width:1px;height:18px;background:#a0a0a0"></div>
<div class="a" style="left:651px;top:357px;width:1px;height:18px;background:#a0a0a0"></div>
<div class="a" style="left:771px;top:357px;width:1px;height:18px;background:#a0a0a0"></div>
<div class="a" style="left:891px;top:357px;width:1px;height:18px;background:#a0a0a0"></div>
<div class="a" style="left:1011px;top:357px;width:1px;height:18px;background:#a0a0a0"></div>
<div class="a" style="left:1031px;top:357px;width:1px;height:18px;background:#a0a0a0"></div>
<div class="a" style="left:1071px;top:357px;width:1px;height:18px;background:#a0a0a0"></div>
<div class="a" style="left:1111px;top:357px;width:1px;height:18px;background:#a0a0a0"></div>
<div class="a" style="left:2px;top:376px;width:1109px;height:18px;background:#faf5bf"></div>
<div class="a" style="left:2px;top:394px;width:1110px;height:1px;background:#a0a0a0"></div>
<div class="t" style="left:4.50px;top:380.23px;font-size:12.6px;">18.09.2025</div>
<div class="t" style="left:104.30px;top:380.23px;font-size:12.6px;">000000000000869</div>
<div class="t" style="left:252.96px;top:380.23px;font-size:12.6px;transform:scaleX(0.9441);transform-origin:0 0;">FATURANIZ</div>
<div class="t" style="left:553.50px;top:380.23px;font-size:12.6px;">18.09.2025</div>
<div class="t" style="left:648.00px;width:120px;text-align:right;top:380.23px;font-size:12.6px;">0,00</div>
<div class="t" style="left:768.00px;width:120px;text-align:right;top:380.23px;font-size:12.6px;">11,80</div>
<div class="t" style="left:888.00px;width:120px;text-align:right;top:380.23px;font-size:12.6px;">304.674,73</div>
<div class="a" style="left:101px;top:376px;width:1px;height:18px;background:#a0a0a0"></div>
<div class="a" style="left:251px;top:376px;width:1px;height:18px;background:#a0a0a0"></div>
<div class="a" style="left:551px;top:376px;width:1px;height:18px;background:#a0a0a0"></div>
<div class="a" style="left:651px;top:376px;width:1px;height:18px;background:#a0a0a0"></div>
<div class="a" style="left:771px;top:376px;width:1px;height:18px;background:#a0a0a0"></div>
<div class="a" style="left:891px;top:376px;width:1px;height:18px;background:#a0a0a0"></div>
<div class="a" style="left:1011px;top:376px;width:1px;height:18px;background:#a0a0a0"></div>
<div class="a" style="left:1031px;top:376px;width:1px;height:18px;background:#a0a0a0"></div>
<div class="a" style="left:1071px;top:376px;width:1px;height:18px;background:#a0a0a0"></div>
<div class="a" style="left:1111px;top:376px;width:1px;height:18px;background:#a0a0a0"></div>
<div class="a" style="left:2px;top:395px;width:1109px;height:18px;background:#000058"></div>
<div class="a" style="left:2px;top:413px;width:1110px;height:1px;background:#a0a0a0"></div>
<div class="t" style="left:4.50px;top:399.23px;font-size:12.6px;color:#fff;">11.12.2025</div>
<div class="t" style="left:104.30px;top:399.23px;font-size:12.6px;color:#fff;">AD01</div>
<div class="t" style="left:252.93px;top:399.23px;font-size:12.6px;transform:scaleX(0.9687);transform-origin:0 0;color:#fff;">NAKİT KASA TAHSİLAT</div>
<div class="t" style="left:553.50px;top:399.23px;font-size:12.6px;color:#fff;">11.12.2025</div>
<div class="t" style="left:648.00px;width:120px;text-align:right;top:399.23px;font-size:12.6px;color:#fff;">0,00</div>
<div class="t" style="left:768.00px;width:120px;text-align:right;top:399.23px;font-size:12.6px;color:#fff;">500,00</div>
<div class="t" style="left:888.00px;width:120px;text-align:right;top:399.23px;font-size:12.6px;color:#fff;">304.174,73</div>
<div class="a" style="left:101px;top:395px;width:1px;height:18px;background:#a0a0a0"></div>
<div class="a" style="left:251px;top:395px;width:1px;height:18px;background:#a0a0a0"></div>
<div class="a" style="left:551px;top:395px;width:1px;height:18px;background:#a0a0a0"></div>
<div class="a" style="left:651px;top:395px;width:1px;height:18px;background:#a0a0a0"></div>
<div class="a" style="left:771px;top:395px;width:1px;height:18px;background:#a0a0a0"></div>
<div class="a" style="left:891px;top:395px;width:1px;height:18px;background:#a0a0a0"></div>
<div class="a" style="left:1011px;top:395px;width:1px;height:18px;background:#a0a0a0"></div>
<div class="a" style="left:1031px;top:395px;width:1px;height:18px;background:#a0a0a0"></div>
<div class="a" style="left:1071px;top:395px;width:1px;height:18px;background:#a0a0a0"></div>
<div class="a" style="left:1111px;top:395px;width:1px;height:18px;background:#a0a0a0"></div>
<div class="a" style="left:1px;top:952px;width:1917px;height:61px;background:#f0f0f0"></div>
<div class="a" style="left:17px;top:966px;width:148px;height:8px;border:1px solid #a0a0a0;box-shadow:inset 1px 1px 0 #fff"></div>
<div class="a" style="left:18px;top:975px;width:146px;height:18px;background:#fff"></div>
<div class="a" style="left:17px;top:995px;width:148px;height:7px;border:1px solid #a0a0a0;border-top:1px solid #fff;box-shadow:inset 1px 0 0 #fff"></div>
<div class="a" style="left:177px;top:966px;width:148px;height:8px;border:1px solid #a0a0a0;box-shadow:inset 1px 1px 0 #fff"></div>
<div class="a" style="left:178px;top:975px;width:146px;height:18px;background:#fff"></div>
<div class="a" style="left:177px;top:995px;width:148px;height:7px;border:1px solid #a0a0a0;border-top:1px solid #fff;box-shadow:inset 1px 0 0 #fff"></div>
<div class="a" style="left:334px;top:966px;width:148px;height:8px;border:1px solid #a0a0a0;box-shadow:inset 1px 1px 0 #fff"></div>
<div class="a" style="left:335px;top:975px;width:146px;height:18px;background:#fff"></div>
<div class="a" style="left:334px;top:995px;width:148px;height:7px;border:1px solid #a0a0a0;border-top:1px solid #fff;box-shadow:inset 1px 0 0 #fff"></div>
<div class="a" style="left:24.2px;top:962px;width:62.8px;height:10px;background:#f0f0f0"></div>
<div class="t" style="left:24.20px;top:961.86px;font-size:10.8px;transform:scaleX(0.9967);transform-origin:0 0;">Borç Toplamı</div>
<div class="t" style="left:108.16px;top:977.71px;font-size:10.5px;transform:scaleX(1.0392);transform-origin:0 0;">307.814,80</div>
<div class="a" style="left:184.4px;top:962px;width:73.20000000000002px;height:10px;background:#f0f0f0"></div>
<div class="t" style="left:185.40px;top:961.86px;font-size:10.8px;transform:scaleX(0.9889);transform-origin:0 0;">Alacak Toplamı</div>
<div class="t" style="left:279.95px;top:977.71px;font-size:10.5px;transform:scaleX(1.0450);transform-origin:0 0;">3.640,07</div>
<div class="a" style="left:341.6px;top:962px;width:59.099999999999966px;height:10px;background:#f0f0f0"></div>
<div class="t" style="left:341.58px;top:961.86px;font-size:10.8px;transform:scaleX(1.0196);transform-origin:0 0;">Borç Bakiye</div>
<div class="t" style="left:425.45px;top:977.71px;font-size:10.5px;transform:scaleX(1.0490);transform-origin:0 0;">304.174,73</div>
<div class="a" style="left:0px;top:1012px;width:1919px;height:2px;background:#9c9ca6"></div>
<div class="a" style="left:0px;top:1014px;width:1919px;height:26px;background:#f0f0f0"></div>
<div class="a" style="left:0px;top:1016px;width:151px;height:24px;border-top:1px solid #a0a0a0;border-left:1px solid #a0a0a0;border-right:1px solid #fff;border-bottom:1px solid #fff"></div>
<div class="a" style="left:154px;top:1016px;width:401px;height:24px;border-top:1px solid #a0a0a0;border-left:1px solid #a0a0a0;border-right:1px solid #fff;border-bottom:1px solid #fff"></div>
<div class="a" style="left:558px;top:1016px;width:101px;height:24px;border-top:1px solid #a0a0a0;border-left:1px solid #a0a0a0;border-right:1px solid #fff;border-bottom:1px solid #fff"></div>
<div class="a" style="left:662px;top:1016px;width:91px;height:24px;border-top:1px solid #a0a0a0;border-left:1px solid #a0a0a0;border-right:1px solid #fff;border-bottom:1px solid #fff"></div>
<div class="a" style="left:756px;top:1016px;width:201px;height:24px;border-top:1px solid #a0a0a0;border-left:1px solid #a0a0a0;border-right:1px solid #fff;border-bottom:1px solid #fff"></div>
<div class="a" style="left:960px;top:1016px;width:161px;height:24px;border-top:1px solid #a0a0a0;border-left:1px solid #a0a0a0;border-right:1px solid #fff;border-bottom:1px solid #fff"></div>
<div class="a" style="left:1124px;top:1016px;width:261px;height:24px;border-top:1px solid #a0a0a0;border-left:1px solid #a0a0a0;border-right:1px solid #fff;border-bottom:1px solid #fff"></div>
<div class="a" style="left:1388px;top:1016px;width:531px;height:24px;border-top:1px solid #a0a0a0;border-left:1px solid #a0a0a0;border-right:1px solid #fff;border-bottom:1px solid #fff"></div>
<div class="t" style="left:2.15px;top:1022.52px;font-size:11.2px;transform:scaleX(1.0453);transform-origin:0 0;font-weight:bold;">Kodu : T00002</div>
<div class="t" style="left:157.03px;top:1022.52px;font-size:11.2px;transform:scaleX(0.9715);transform-origin:0 0;font-weight:bold;">Ünvanı : OZEL OPEL MEHMET USTA</div>
<div class="t" style="left:560.20px;top:1022.52px;font-size:11.2px;transform:scaleX(1.0000);transform-origin:0 0;font-weight:bold;">Koşul :</div>
<div class="t" style="left:665.30px;top:1022.52px;font-size:11.2px;transform:scaleX(0.9893);transform-origin:0 0;font-weight:bold;">OZEN2022</div>
<div class="a" style="left:757px;top:1017px;width:199px;height:22px;overflow:hidden"><div class="t" style="left:2.00px;top:5.52px;font-size:11.2px;font-weight:bold;">0 - ÖZEN OTOMOTİV - MURAT İFRAZ</div>
</div><div class="t" style="left:962.00px;top:1022.52px;font-size:11.2px;transform:scaleX(1.0000);transform-origin:0 0;font-weight:bold;">NETSIS</div>
<div class="t" style="left:1142.00px;top:1022.52px;font-size:11.2px;transform:scaleX(1.0437);transform-origin:0 0;font-weight:bold;">AFK Yazılım Destek info@afkyazilim.com.tr</div>
<div class="a" style="left:0px;top:1040px;width:1919px;height:2px;background:#2b2838"></div>
<div class="a" style="left:296px;top:1040px;width:47px;height:2px;background:#5c566a"></div>
</body></html>
